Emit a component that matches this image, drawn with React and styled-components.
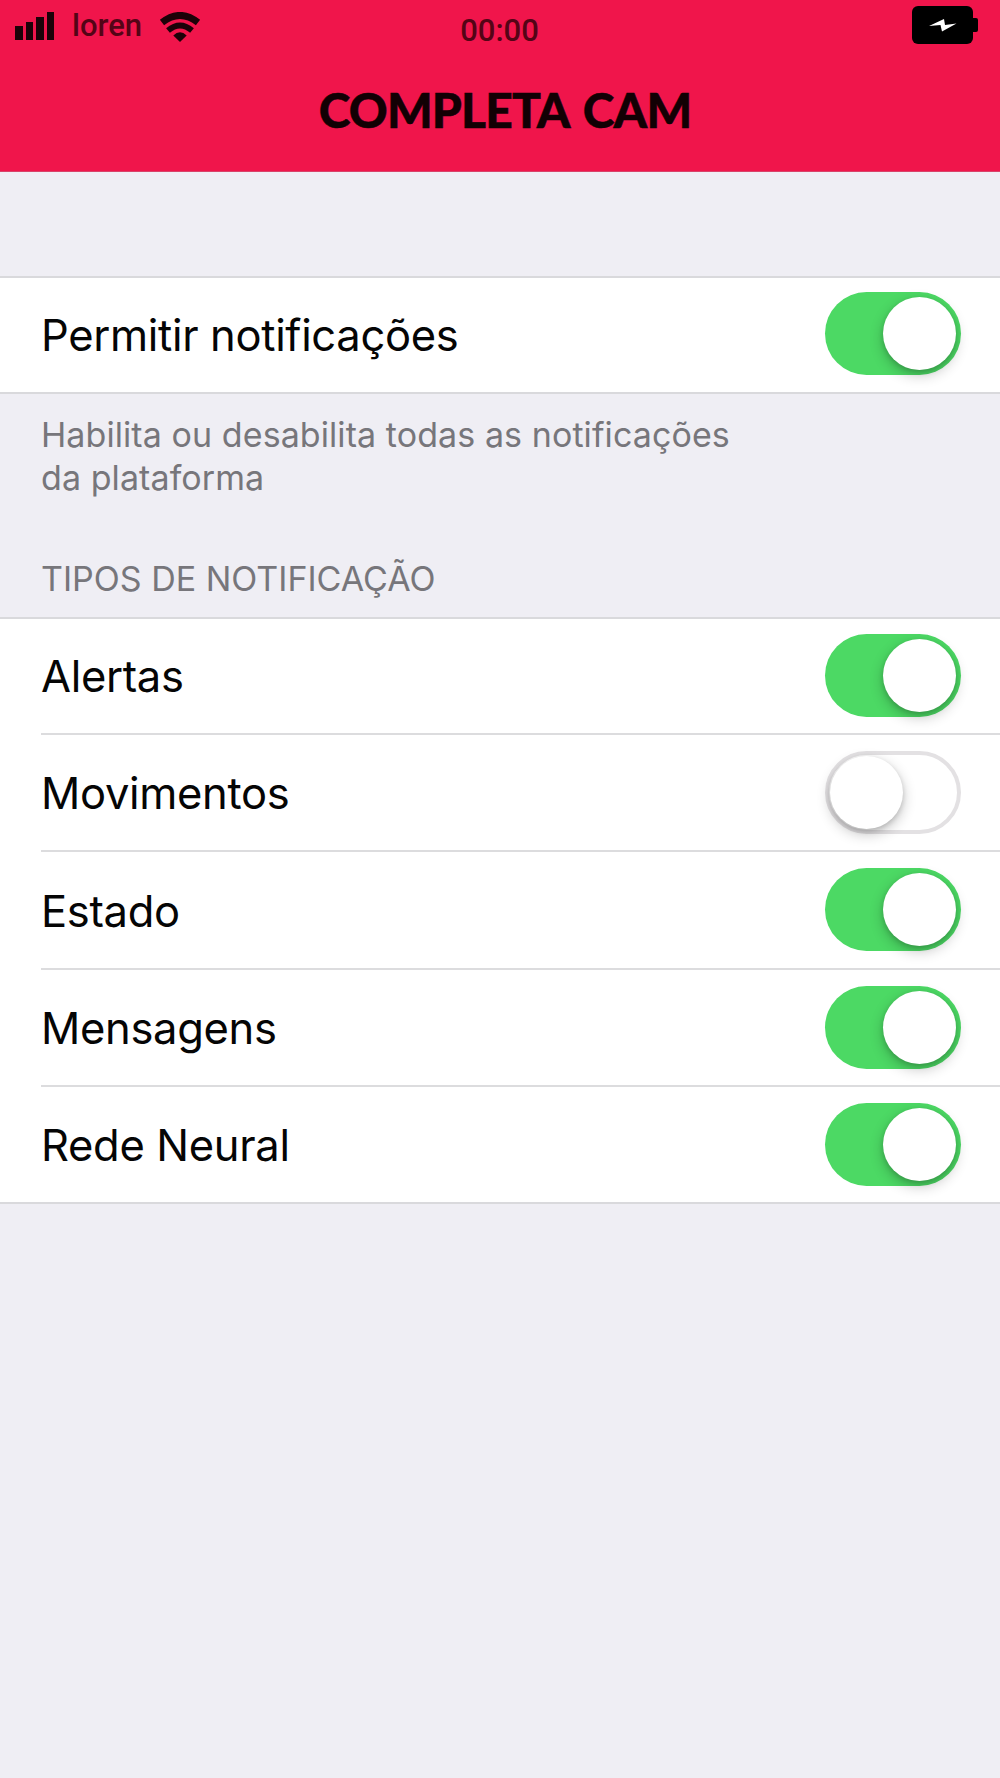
import React, { useState } from "react";
import styled, { createGlobalStyle } from "styled-components";

const GlobalStyle = createGlobalStyle`
  *, *::before, *::after { box-sizing: border-box; }
  body { margin: 0; background: #efeef4; }
`;

const Screen = styled.div`
  width: 1000px;
  min-height: 1778px;
  display: flex;
  flex-direction: column;
  background: #efeef4;
  color: #050505;
  font-family: Inter, "Liberation Sans", sans-serif;
  -webkit-font-smoothing: antialiased;
`;

const Header = styled.header`
  height: 172px;
  background: #f0154b;
  border-bottom: 1px solid #d8436a;
`;

const StatusBar = styled.div`
  height: 60px;
  padding: 0 22px 0 15px;
  display: grid;
  grid-template-columns: 1fr auto 1fr;
  align-items: start;
`;

const StatusGroup = styled.div`
  display: flex;
  align-items: flex-start;
  justify-content: ${(p) => (p.$end ? "flex-end" : "flex-start")};
  padding-top: ${(p) => p.$top}px;
`;

const StatusText = styled.span`
  font-family: Roboto, "Liberation Sans", sans-serif;
  font-size: 31px;
  line-height: 36px;
  font-weight: 500;
  color: #540416;
`;

const Carrier = styled(StatusText)`
  margin: -4px 17px 0 18px;
`;

const Clock = styled(StatusText)`
  margin: 1px 0 0 6px;
`;

const SignalBars = styled.div`
  display: flex;
  align-items: flex-end;
  gap: 3px;
  height: 28px;
`;

const Bar = styled.span`
  width: 7.5px;
  height: ${(p) => p.$h}px;
  background: #1c0208;
`;

const Title = styled.h1`
  margin: 18px 0 0 10px;
  text-align: center;
  font-family: Lato, "Open Sans", sans-serif;
  font-weight: 900;
  font-size: 48px;
  line-height: 64px;
  letter-spacing: -0.8px;
  word-spacing: 4px;
  color: #120004;
  -webkit-text-stroke: 0.5px #120004;
`;

const Group = styled.section`
  margin-top: ${(p) => p.$top}px;
  background: #fff;
  border-top: 2px solid #d9d9dc;
  border-bottom: 2px solid #d9d9dc;
`;

const Row = styled.div`
  margin-left: 41px;
  padding-right: 39.5px;
  height: ${(p) => p.$h}px;
  display: flex;
  align-items: center;
  justify-content: space-between;
  & + & {
    border-top: 2px solid #dcdcde;
    padding-top: 1.5px;
  }
`;

const Label = styled.span`
  font-size: 43.5px;
  line-height: 54px;
  letter-spacing: -0.32px;
`;

const Track = styled.button`
  width: 136px;
  height: 83px;
  margin: 0 0 ${(p) => p.$lift || 2}px;
  padding: ${(p) => (p.$on ? "5px 4.5px" : "1px")};
  display: flex;
  justify-content: ${(p) => (p.$on ? "flex-end" : "flex-start")};
  border: ${(p) => (p.$on ? "0" : "4px solid #e3e1e3")};
  border-radius: 42px;
  background: ${(p) => (p.$on ? "#4cd964" : "#fff")};
`;

const Knob = styled.span`
  width: 73px;
  height: 73px;
  border-radius: 50%;
  background: #fff;
  box-shadow: 0 5px 14px rgba(0, 0, 0, 0.24), 0 2px 5px rgba(0, 0, 0, 0.14);
`;

const Note = styled.p`
  margin: 19px 0 0 41px;
  width: 720px;
  font-size: 34px;
  line-height: 43px;
  letter-spacing: 0.08px;
  color: #77767b;
`;

const SectionTitle = styled.h2`
  margin: 58px 0 0 41px;
  font-size: 34px;
  font-weight: 400;
  line-height: 43px;
  color: #77767b;
`;

function Wifi() {
  return (
    <svg width="42" height="32" viewBox="0 0 42 32" fill="none" stroke="#1c0208">
      <path d="M3 10.5 Q21 -3.7 39 10.500" strokeWidth="6.800" />
      <path d="M9 18.500 Q21 8.300 33 18.500" strokeWidth="5.800" />
      <path d="M14.300 23.500 Q21 16.800 27.700 23.500 L21 30 Z" fill="#1c0208" stroke="none" />
    </svg>
  );
}

function Battery() {
  return (
    <svg width="66" height="38" viewBox="0 0 66 38">
      <rect width="61" height="38" rx="6" fill="#000" />
      <rect x="58" y="12" width="8" height="14" rx="2" fill="#000" />
      <path d="M17 20 L32 13 L33 19 L44.500 17.500 L30 25.500 L28.500 19 Z" fill="#fff" />
    </svg>
  );
}

function Toggle({ on, onChange, label, lift }) {
  return (
    <Track type="button" role="switch" aria-checked={on} aria-label={label} $on={on} $lift={lift} onClick={onChange}>
      <Knob />
    </Track>
  );
}

const TYPES = [
  { name: "Alertas", on: true, h: 114 },
  { name: "Movimentos", on: false, h: 117 },
  { name: "Estado", on: true, h: 118 },
  { name: "Mensagens", on: true, h: 117 },
  { name: "Rede Neural", on: true, h: 117 },
];

export default function App() {
  const [allowed, setAllowed] = useState(true);
  const [types, setTypes] = useState(TYPES);
  const flip = (name) =>
    setTypes((list) => list.map((t) => (t.name === name ? { ...t, on: !t.on } : t)));

  return (
    <>
      <GlobalStyle />
      <Screen>
        <Header>
          <StatusBar>
            <StatusGroup $top={12}>
              <SignalBars>
                {[14, 18, 23, 28].map((h) => (
                  <Bar key={h} $h={h} />
                ))}
              </SignalBars>
              <Carrier>loren</Carrier>
              <Wifi />
            </StatusGroup>
            <StatusGroup $top={12}>
              <Clock>00:00</Clock>
            </StatusGroup>
            <StatusGroup $top={6} $end>
              <Battery />
            </StatusGroup>
          </StatusBar>
          <Title>COMPLETA CAM</Title>
        </Header>
        <Group $top={104}>
          <Row $h={114}>
            <Label>Permitir notificações</Label>
            <Toggle on={allowed} onChange={() => setAllowed(!allowed)} label="Permitir notificações" lift={4} />
          </Row>
        </Group>
        <Note>
          Habilita ou desabilita todas as notificações
          <br />
          da plataforma
        </Note>
        <SectionTitle>TIPOS DE NOTIFICAÇÃO</SectionTitle>
        <Group $top={17}>
          {types.map((t) => (
            <Row key={t.name} $h={t.h}>
              <Label>{t.name}</Label>
              <Toggle on={t.on} onChange={() => flip(t.name)} label={t.name} />
            </Row>
          ))}
        </Group>
      </Screen>
    </>
  );
}
